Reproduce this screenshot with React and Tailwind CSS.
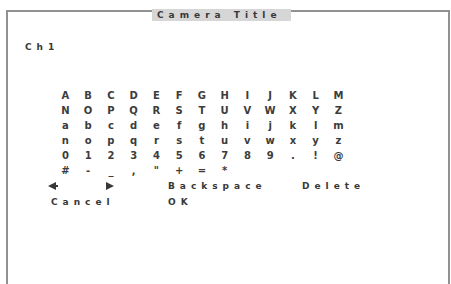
import React from "react";

const rows = [
  ["A","B","C","D","E","F","G","H","I","J","K","L","M"],
  ["N","O","P","Q","R","S","T","U","V","W","X","Y","Z"],
  ["a","b","c","d","e","f","g","h","i","j","k","l","m"],
  ["n","o","p","q","r","s","t","u","v","w","x","y","z"],
  ["0","1","2","3","4","5","6","7","8","9",".","!","@"],
  ["#","-","_",",","\"","+","=","*"],
];

export default function App() {
  return (
    <div className="w-[451px] h-[284px] bg-white overflow-hidden font-['DejaVu_Sans',sans-serif] text-[#383838]">
      <div className="ml-[6px] mt-[10px] w-[444px] h-[274px] border-2 border-b-0 border-[#919191] flex flex-col">
        <div className="ml-[144px] -mt-[3px] h-[12px] w-[139px] bg-[#d6d6d6] flex items-center pl-[5px] text-[9px] font-bold tracking-[5px] leading-none whitespace-nowrap">
          Camera Title
        </div>
        <div className="ml-[17px] mt-[20px] h-[12px] flex items-center text-[9px] font-bold tracking-[5px] leading-none">
          Ch1
        </div>
        <div className="ml-[46px] mt-[35px] flex flex-col">
          {rows.map((r, i) => (
            <div key={i} className="grid grid-cols-[repeat(13,22.75px)] h-[15px] items-center">
              {r.map((c, j) => (
                <span key={j} className="text-center text-[10px] font-bold leading-none text-[#3c3c3c]">
                  {c}
                </span>
              ))}
            </div>
          ))}
        </div>
        <div className="flex items-center h-[16px] text-[9px] font-bold tracking-[5px] leading-none">
          <div className="w-[160px] flex items-center pl-[40px]">
            <svg width="10" height="8" viewBox="0 0 10 8" className="shrink-0">
              <polygon points="0,4 8,0 8,8" fill="#383838" />
              <rect x="7" y="3" width="3" height="2" fill="#383838" />
            </svg>
            <svg width="8" height="8" viewBox="0 0 8 8" className="ml-[48px] shrink-0">
              <polygon points="8,4 0,0 0,8" fill="#383838" />
            </svg>
          </div>
          <div className="w-[134px]">Backspace</div>
          <div>Delete</div>
        </div>
        <div className="flex items-center h-[16px] text-[9px] font-bold tracking-[5px] leading-none">
          <div className="w-[160px] pl-[43px]">Cancel</div>
          <div>OK</div>
        </div>
      </div>
    </div>
  );
}
